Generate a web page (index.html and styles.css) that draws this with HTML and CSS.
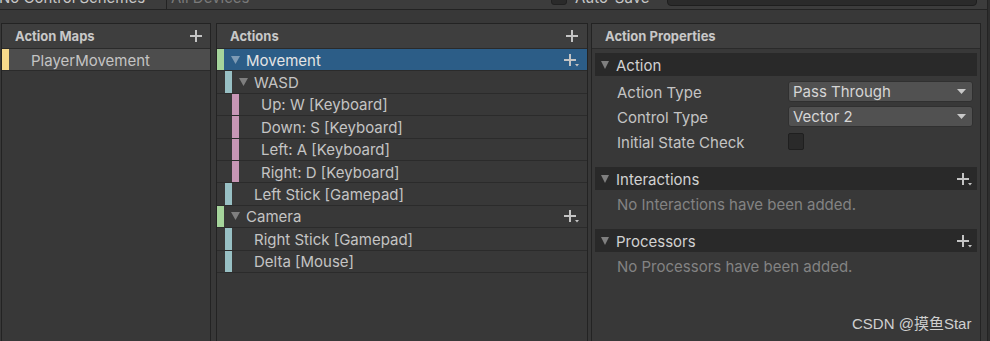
FILE: index.html
```html
<!DOCTYPE html>
<html>
<head>
<meta charset="utf-8">
<link rel="stylesheet" href="styles.css">
</head>
<body>
<div class="window">
  <div class="toolbar">
    <div class="tb-scheme">No Control Schemes</div>
    <div class="tb-sep"></div>
    <div class="tb-devices">All Devices</div>
    <div class="tb-check"></div>
    <div class="tb-label">Auto-Save</div>
    <div class="tb-search"></div>
  </div>
  <div class="main">
    <section class="panel maps">
      <div class="panel-head">
        <span class="head-title">Action Maps</span>
        <svg class="plus" width="12" height="12" viewBox="0 0 12 12"><rect x="5" y="0" width="2" height="12"/><rect x="0" y="5" width="12" height="2"/></svg>
      </div>
      <div class="row gray">
        <i class="bar yellow"></i><span class="row-text">PlayerMovement</span>
      </div>
    </section>

    <section class="panel actions">
      <div class="panel-head">
        <span class="head-title">Actions</span>
        <svg class="plus" width="12" height="12" viewBox="0 0 12 12"><rect x="5" y="0" width="2" height="12"/><rect x="0" y="5" width="12" height="2"/></svg>
      </div>
      <div class="row sel">
        <i class="bar green"></i>
        <span class="tri"><svg width="9" height="8" viewBox="0 0 9 8"><polygon points="0,0 9,0 4.5,8"/></svg></span>
        <span class="row-text">Movement</span>
        <svg class="plusdd" width="16" height="14" viewBox="0 0 16 14"><rect x="5" y="0" width="2" height="12"/><rect x="0" y="5" width="12" height="2"/><polygon points="11,10 15,10 13,12.5"/></svg>
      </div>
      <div class="row lv1">
        <i class="bar teal"></i>
        <span class="tri"><svg width="9" height="8" viewBox="0 0 9 8"><polygon points="0,0 9,0 4.5,8"/></svg></span>
        <span class="row-text">WASD</span>
      </div>
      <div class="row lv2"><i class="bar pink"></i><span class="row-text leaf">Up: W [Keyboard]</span></div>
      <div class="row lv2"><i class="bar pink"></i><span class="row-text leaf">Down: S [Keyboard]</span></div>
      <div class="row lv2"><i class="bar pink"></i><span class="row-text leaf">Left: A [Keyboard]</span></div>
      <div class="row lv2"><i class="bar pink"></i><span class="row-text leaf">Right: D [Keyboard]</span></div>
      <div class="row lv1"><i class="bar teal"></i><span class="row-text leaf">Left Stick [Gamepad]</span></div>
      <div class="row">
        <i class="bar green"></i>
        <span class="tri"><svg width="9" height="8" viewBox="0 0 9 8"><polygon points="0,0 9,0 4.5,8"/></svg></span>
        <span class="row-text">Camera</span>
        <svg class="plusdd" width="16" height="14" viewBox="0 0 16 14"><rect x="5" y="0" width="2" height="12"/><rect x="0" y="5" width="12" height="2"/><polygon points="11,10 15,10 13,12.5"/></svg>
      </div>
      <div class="row lv1"><i class="bar teal"></i><span class="row-text leaf">Right Stick [Gamepad]</span></div>
      <div class="row lv1"><i class="bar teal"></i><span class="row-text leaf">Delta [Mouse]</span></div>
    </section>

    <section class="panel props">
      <div class="panel-head">
        <span class="head-title">Action Properties</span>
      </div>
      <div class="fold first">
        <span class="ftri"><svg width="8" height="8" viewBox="0 0 8 8"><polygon points="0,0 8,0 4,8"/></svg></span>
        <span class="fold-title">Action</span>
      </div>
      <div class="prop first-prop">
        <span class="prop-label">Action Type</span>
        <div class="dropdown"><span>Pass Through</span><svg width="9" height="5" viewBox="0 0 9 5"><polygon points="0,0 9,0 4.5,5"/></svg></div>
      </div>
      <div class="prop">
        <span class="prop-label">Control Type</span>
        <div class="dropdown"><span>Vector 2</span><svg width="9" height="5" viewBox="0 0 9 5"><polygon points="0,0 9,0 4.5,5"/></svg></div>
      </div>
      <div class="prop">
        <span class="prop-label">Initial State Check</span>
        <div class="checkbox"></div>
      </div>
      <div class="fold gap">
        <span class="ftri"><svg width="8" height="8" viewBox="0 0 8 8"><polygon points="0,0 8,0 4,8"/></svg></span>
        <span class="fold-title">Interactions</span>
        <svg class="plusdd" width="16" height="14" viewBox="0 0 16 14"><rect x="5" y="0" width="2" height="12"/><rect x="0" y="5" width="12" height="2"/><polygon points="11,10 15,10 13,12.5"/></svg>
      </div>
      <div class="hint">No Interactions have been added.</div>
      <div class="fold">
        <span class="ftri"><svg width="8" height="8" viewBox="0 0 8 8"><polygon points="0,0 8,0 4,8"/></svg></span>
        <span class="fold-title">Processors</span>
        <svg class="plusdd" width="16" height="14" viewBox="0 0 16 14"><rect x="5" y="0" width="2" height="12"/><rect x="0" y="5" width="12" height="2"/><polygon points="11,10 15,10 13,12.5"/></svg>
      </div>
      <div class="hint">No Processors have been added.</div>
    </section>
  </div>
</div>
<div class="watermark">CSDN @摸鱼Star</div>
</body>
</html>
```

FILE: styles.css
```css
* { box-sizing: border-box; }

html, body {
  margin: 0;
  padding: 0;
}

body {
  width: 990px;
  height: 341px;
  overflow: hidden;
  background: #2e2e2e;
  font-family: Inter, "Noto Sans", sans-serif;
  font-size: 15px;
  color: #c4c4c4;
  position: relative;
}

.window {
  width: 988px;
  height: 341px;
  background: #383838;
  border-right: 1px solid #232323;
  overflow: hidden;
}

/* toolbar (mostly scrolled out of view) */
.toolbar {
  height: 21px;
  margin-top: -11px;
  display: flex;
  align-items: center;
  padding-bottom: 5px;
  background: #3c3c3c;
  border-bottom: 1px solid #232323;
}

.tb-scheme {
  width: 167px;
  margin-left: -1px;
  color: #c8c8c8;
  white-space: nowrap;
  margin-top: 2px;
}

.tb-sep {
  width: 1px;
  align-self: stretch;
  margin-bottom: -5px;
  background: #232323;
}

.tb-devices {
  width: 384px;
  padding-left: 4px;
  color: #7a7a7a;
  margin-top: 2px;
}

.tb-check {
  width: 16px;
  height: 16px;
  border-radius: 3px;
  background: #2a2a2a;
  border: 1px solid #212121;
}

.tb-label {
  width: 100px;
  padding-left: 8px;
  color: #c8c8c8;
  margin-top: 2px;
}

.tb-search {
  width: 310px;
  height: 18px;
  border-radius: 4px;
  background: #2a2a2a;
  border: 1px solid #1e1e1e;
}

/* main area */
.main {
  display: flex;
  padding: 13px 0 0 1px;
}

.panel {
  height: 330px;
  border: 1px solid #232323;
  background: #383838;
}

.maps { width: 210px; }
.actions { width: 372px; margin-left: 5px; }
.props { width: 390px; margin-left: 3px; }

.panel-head {
  height: 25px;
  display: flex;
  align-items: center;
  padding: 0 8px 0 13px;
  background: #3e3e3e;
  border-bottom: 1px solid #2a2a2a;
}

.actions .panel-head { padding-right: 9px; }

.head-title {
  flex: 1;
  font-size: 13px;
  font-weight: 700;
  color: #c8c8c8;
}

.plus { fill: #c4c4c4; }

/* tree rows */
.row {
  height: 22.4px;
  display: flex;
  align-items: stretch;
  border-bottom: 1px solid #2b2b2b;
  padding-right: 7px;
}

.row.gray { background: #4d4d4d; height: 22px; }
.row.sel { background: #2c5d87; }

.row.lv1 { padding-left: 8px; }
.row.lv2 { padding-left: 15px; }

.bar {
  width: 7px;
  flex: none;
}

.yellow { background: #f6d98b; }
.green { background: #a5d49b; }
.teal { background: #98c0c4; }
.pink { background: #c796b5; }

.tri {
  width: 22px;
  flex: none;
  display: flex;
  align-items: center;
  padding-left: 7px;
  fill: #7f7f7f;
}

.sel .tri { fill: #7e9bb5; }

.row-text {
  flex: 1;
  display: flex;
  align-items: center;
  white-space: nowrap;
  color: #c4c4c4;
  padding-top: 1px;
}

.row-text.leaf { padding-left: 22px; }
.maps .row-text { padding-left: 22px; }

.sel .row-text { color: #e4e4e4; }

.plusdd {
  align-self: center;
  fill: #c4c4c4;
  margin-top: 2px;
}

/* properties */
.fold {
  height: 23px;
  margin: 0 3px;
  display: flex;
  align-items: center;
  padding: 0 4px 0 6px;
  background: #292929;
}

.fold.first { margin-top: 4px; }
.fold.gap { margin-top: 13px; }

.ftri {
  width: 15px;
  display: flex;
  align-items: center;
  fill: #7f7f7f;
  margin-top: 1px;
}

.fold-title {
  flex: 1;
  color: #d2d2d2;
  padding-top: 1px;
}

.fold .plusdd { margin-top: 3px; }

.prop {
  height: 25px;
  display: flex;
  align-items: center;
  padding-left: 25px;
}

.prop.first-prop { margin-top: 3px; }

.prop-label {
  width: 171px;
  color: #c4c4c4;
  padding-top: 1px;
}

.dropdown {
  width: 185px;
  height: 21px;
  display: flex;
  align-items: center;
  justify-content: space-between;
  padding: 0 6px 0 4px;
  background: #515151;
  border: 1px solid #303030;
  border-radius: 3px;
  color: #d6d6d6;
  fill: #c8c8c8;
}

.checkbox {
  width: 16px;
  height: 17px;
  background: #2a2a2a;
  border: 1px solid #1f1f1f;
  border-radius: 2px;
}

.hint {
  height: 30px;
  line-height: 30px;
  padding-left: 25px;
  margin-bottom: 9px;
  color: #838383;
}

.watermark {
  position: absolute;
  left: 852px;
  top: 312px;
  font-family: "Liberation Sans", "Noto Sans CJK SC", sans-serif;
  font-size: 15px;
  color: #d0d0d0;
  white-space: nowrap;
}
```
